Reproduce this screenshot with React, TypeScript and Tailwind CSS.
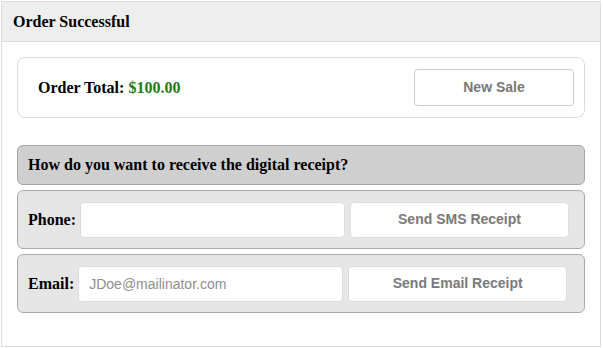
import React from 'react';

const serif = "font-['Liberation_Serif','Times_New_Roman',serif]";
const sans = "font-['Liberation_Sans',Arial,sans-serif]";

const ReceiptRow = ({
  label,
  placeholder,
  action,
}: {
  label: string;
  placeholder?: string;
  action: string;
}) => (
  <div className="flex items-center h-[59px] px-[10px] bg-[#e6e6e6] border border-[#aaaaaa] rounded-[6px]">
    <label className={`${serif} font-bold text-[16px] text-black`}>{label}</label>
    <input
      type="text"
      placeholder={placeholder}
      className={`${sans} ml-[4px] w-[265px] h-[36px] px-[10px] text-[14px] bg-white border border-[#dddddd] rounded-[4px] placeholder:text-[#8f8f8f] outline-none`}
    />
    <button
      type="button"
      className={`${sans} ml-[5px] w-[219px] h-[36px] bg-white border border-[#dddddd] rounded-[4px] text-[14px] font-bold text-[#7a7a7a]`}
    >
      {action}
    </button>
  </div>
);

const App = () => {
  return (
    <div className="p-px bg-white">
      <div className="w-[600px] h-[346px] border border-[#dddddd] bg-white">
        <div className="h-[40px] flex items-center px-[11px] bg-[#eeeeee] border-b border-[#dddddd]">
          <h1 className={`${serif} font-bold text-[16px] text-black`}>Order Successful</h1>
        </div>
        <div className="px-[15px] pt-[15px]">
          <div className="h-[61px] flex items-center justify-between pl-[20px] pr-[10px] border border-[#dddddd] rounded-[8px]">
            <p className={`${serif} font-bold text-[16px] text-black`}>
              Order Total: <span className="text-[#1e7b1e]">$100.00</span>
            </p>
            <button
              type="button"
              className={`${sans} w-[160px] h-[37px] bg-white border border-[#cccccc] rounded-[4px] text-[14px] font-bold text-[#777777]`}
            >
              New Sale
            </button>
          </div>
          <div className="mt-[27px] flex flex-col gap-[5px]">
            <div className="h-[40px] flex items-center px-[10px] bg-[#d0cfcf] border border-[#a5a5a5] rounded-[6px]">
              <h2 className={`${serif} font-bold text-[16px] text-black`}>
                How do you want to receive the digital receipt?
              </h2>
            </div>
            <ReceiptRow label="Phone:" action="Send SMS Receipt" />
            <ReceiptRow label="Email:" placeholder="JDoe@mailinator.com" action="Send Email Receipt" />
          </div>
        </div>
      </div>
    </div>
  );
};

export default App;
